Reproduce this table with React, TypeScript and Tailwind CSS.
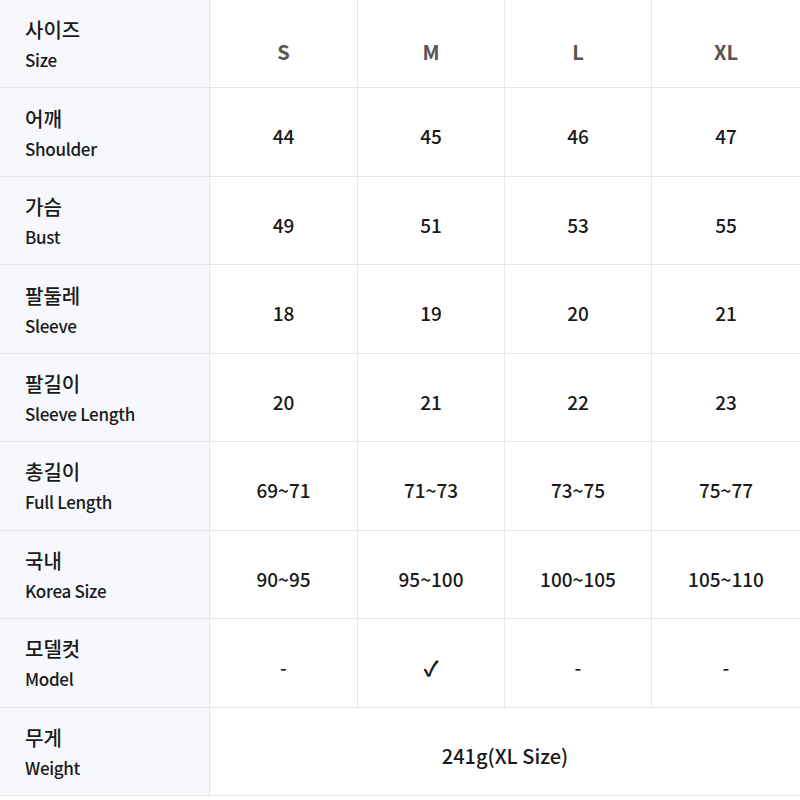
import React from 'react';

const sizes = ['S', 'M', 'L', 'XL'];

const rows = [
  { ko: '어깨', en: 'Shoulder', values: ['44', '45', '46', '47'] },
  { ko: '가슴', en: 'Bust', values: ['49', '51', '53', '55'] },
  { ko: '팔둘레', en: 'Sleeve', values: ['18', '19', '20', '21'] },
  { ko: '팔길이', en: 'Sleeve Length', values: ['20', '21', '22', '23'] },
  { ko: '총길이', en: 'Full Length', values: ['69~71', '71~73', '73~75', '75~77'] },
  { ko: '국내', en: 'Korea Size', values: ['90~95', '95~100', '100~105', '105~110'] },
  { ko: '모델컷', en: 'Model', values: ['-', '✓', '-', '-'] },
];

function Label({ ko, en }: { ko: string; en: string }) {
  return (
    <div className="flex flex-col justify-center pl-[25px] pt-[3px] bg-[#f7f8fc] border-b border-r border-[#e6e6e6]">
      <span className="text-[20px] leading-[30px] font-medium text-[#1a1a1a]">{ko}</span>
      <span className="text-[17px] leading-[30px] font-medium text-[#1a1a1a] tracking-[-0.3px]">{en}</span>
    </div>
  );
}

function Cell({ children, last }: { children: React.ReactNode; last?: boolean }) {
  return (
    <div
      className={
        'flex items-center justify-center pt-[9px] text-[19px] font-medium text-[#1a1a1a] border-b border-[#e6e6e6] ' +
        (last ? '' : 'border-r')
      }
    >
      {children}
    </div>
  );
}

export default function App() {
  return (
    <div
      className="w-[800px] h-[800px] bg-white"
      style={{ fontFamily: '"Noto Sans CJK KR", "Noto Sans", sans-serif' }}
    >
      <div className="grid grid-cols-[210px_148px_147px_147px_148px] grid-rows-9 h-[796px]">
        <Label ko="사이즈" en="Size" />
        {sizes.map((s, i) => (
          <div
            key={s}
            className={
              'flex items-center justify-center pt-[16px] text-[20px] font-bold text-[#555] border-b border-[#e6e6e6] ' +
              (i === 3 ? '' : 'border-r')
            }
          >
            {s}
          </div>
        ))}

        {rows.map((r) => (
          <React.Fragment key={r.en}>
            <Label ko={r.ko} en={r.en} />
            {r.values.map((v, i) => (
              <Cell key={i} last={i === 3}>
                {v === '✓' ? <span className="text-[21px] font-bold">{v}</span> : v}
              </Cell>
            ))}
          </React.Fragment>
        ))}

        <Label ko="무게" en="Weight" />
        <div className="col-span-4 flex items-center justify-center pt-[9px] text-[20px] font-medium text-[#1a1a1a] border-b border-[#e6e6e6]">
          241g(XL Size)
        </div>
      </div>
    </div>
  );
}
